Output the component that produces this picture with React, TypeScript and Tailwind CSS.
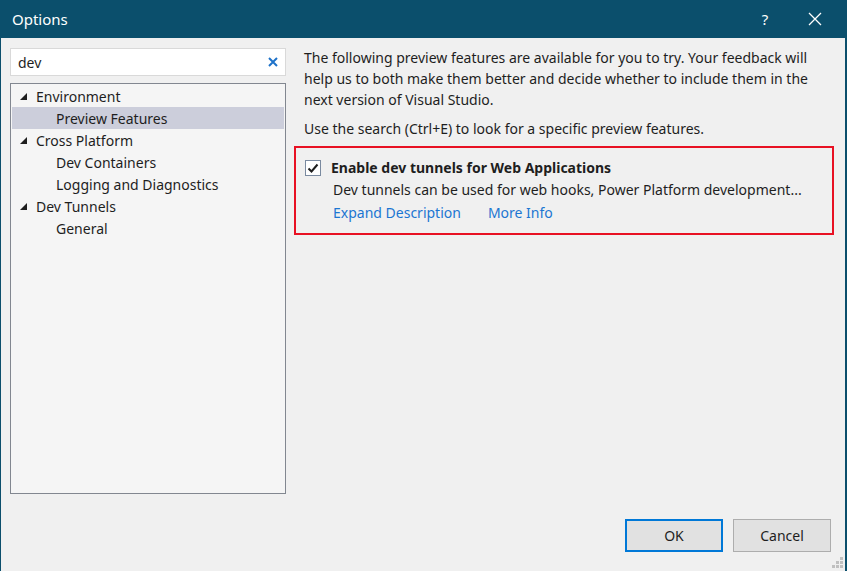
import React from "react";

const font = { fontFamily: '"Noto Sans", "Open Sans", sans-serif' };

function Tri() {
  return (
    <svg width="7" height="7" viewBox="0 0 7 7" className="shrink-0">
      <polygon points="7,0 7,7 0,7" fill="#1e1e1e" />
    </svg>
  );
}

function Row({ label, level, selected }: { label: string; level: 0 | 1; selected?: boolean }) {
  return (
    <div className={`h-[22px] flex items-center ${selected ? "bg-[#cccedb]" : ""}`}>
      {level === 0 ? (
        <div className="flex items-center">
          <div className="w-[8px]" />
          <Tri />
          <div className="w-[9px]" />
          <span>{label}</span>
        </div>
      ) : (
        <div className="pl-[44px]">{label}</div>
      )}
    </div>
  );
}

export default function App() {
  return (
    <div
      className="w-[847px] h-[571px] bg-[#f0f0f0] flex flex-col border-l-[1px] border-r-[2px] border-[#0b4f6c] text-[14px] text-[#1e1e1e] overflow-hidden relative"
      style={font}
    >
      <div className="h-[38px] bg-[#0b4f6c] flex items-center text-white shrink-0">
        <div className="pl-[11px] text-[15px] flex-1">Options</div>
        <div className="w-[40px] text-[15px] text-center">?</div>
        <div className="w-[60px] flex justify-center">
          <svg width="14" height="14" viewBox="0 0 14 14">
            <path d="M1 1 L13 13 M13 1 L1 13" stroke="white" strokeWidth="1.3" />
          </svg>
        </div>
      </div>
      <div className="flex flex-1">
        <div className="pl-[9px] pt-[10px] w-[285px] shrink-0 flex flex-col">
          <div className="h-[28px] bg-white border border-[#d9d9d9] flex items-center pl-[7px] pr-[7px]">
            <span className="flex-1">dev</span>
            <svg width="10" height="10" viewBox="0 0 10 10">
              <path d="M1 1 L9 9 M9 1 L1 9" stroke="#1e72c9" strokeWidth="2" />
            </svg>
          </div>
          <div className="mt-[7px] h-[411px] border border-[#828790] bg-[#f5f5f5] p-[1px]">
            <Row label="Environment" level={0} />
            <Row label="Preview Features" level={1} selected />
            <Row label="Cross Platform" level={0} />
            <Row label="Dev Containers" level={1} />
            <Row label="Logging and Diagnostics" level={1} />
            <Row label="Dev Tunnels" level={0} />
            <Row label="General" level={1} />
          </div>
        </div>
        <div className="flex-1 pl-[8px] pr-[11px] pt-[9px] flex flex-col">
          <div className="pl-[10px] leading-[21px] whitespace-nowrap">
            The following preview features are available for you to try. Your feedback will
            <br />
            help us to both make them better and decide whether to include them in the
            <br />
            next version of Visual Studio.
          </div>
          <div className="pl-[10px] leading-[21px] mt-[8px] whitespace-nowrap">
            Use the search (Ctrl+E) to look for a specific preview features.
          </div>
          <div className="mt-[7px] border-2 border-[#e81123] pl-[9px] pt-[9px] pb-[8px] flex flex-col leading-[22px]">
            <div className="flex items-center h-[22px]">
              <div className="w-[16px] h-[16px] border border-[#7a8aa0] bg-white flex items-center justify-center">
                <svg width="12" height="12" viewBox="0 0 12 12">
                  <path d="M1.5 6.5 L4.5 9.5 L10.5 2.5" stroke="#1e1e1e" strokeWidth="2" fill="none" />
                </svg>
              </div>
              <span className="ml-[10px] font-bold">Enable dev tunnels for Web Applications</span>
            </div>
            <div className="pl-[28px] h-[23px] whitespace-nowrap">
              Dev tunnels can be used for web hooks, Power Platform development...
            </div>
            <div className="pl-[28px] h-[23px] flex text-[#1c76d2]">
              <span>Expand Description</span>
              <span className="ml-[27px]">More Info</span>
            </div>
          </div>
          <div className="flex-1" />
          <div className="flex justify-end gap-[10px] pb-[19px] pr-[3px]">
            <button className="w-[98px] h-[33px] bg-[#e1e1e1] border-2 border-[#0078d7]">OK</button>
            <button className="w-[98px] h-[33px] bg-[#e1e1e1] border border-[#adadad]">Cancel</button>
          </div>
        </div>
      </div>
      <div className="absolute right-[2px] bottom-[3px] grid grid-cols-3 gap-[1px] w-[11px]">
        <div />
        <div />
        <div className="w-[3px] h-[3px] bg-[#c0c0c0]" />
        <div />
        <div className="w-[3px] h-[3px] bg-[#c0c0c0]" />
        <div className="w-[3px] h-[3px] bg-[#c0c0c0]" />
        <div className="w-[3px] h-[3px] bg-[#c0c0c0]" />
        <div className="w-[3px] h-[3px] bg-[#c0c0c0]" />
        <div className="w-[3px] h-[3px] bg-[#c0c0c0]" />
      </div>
    </div>
  );
}
